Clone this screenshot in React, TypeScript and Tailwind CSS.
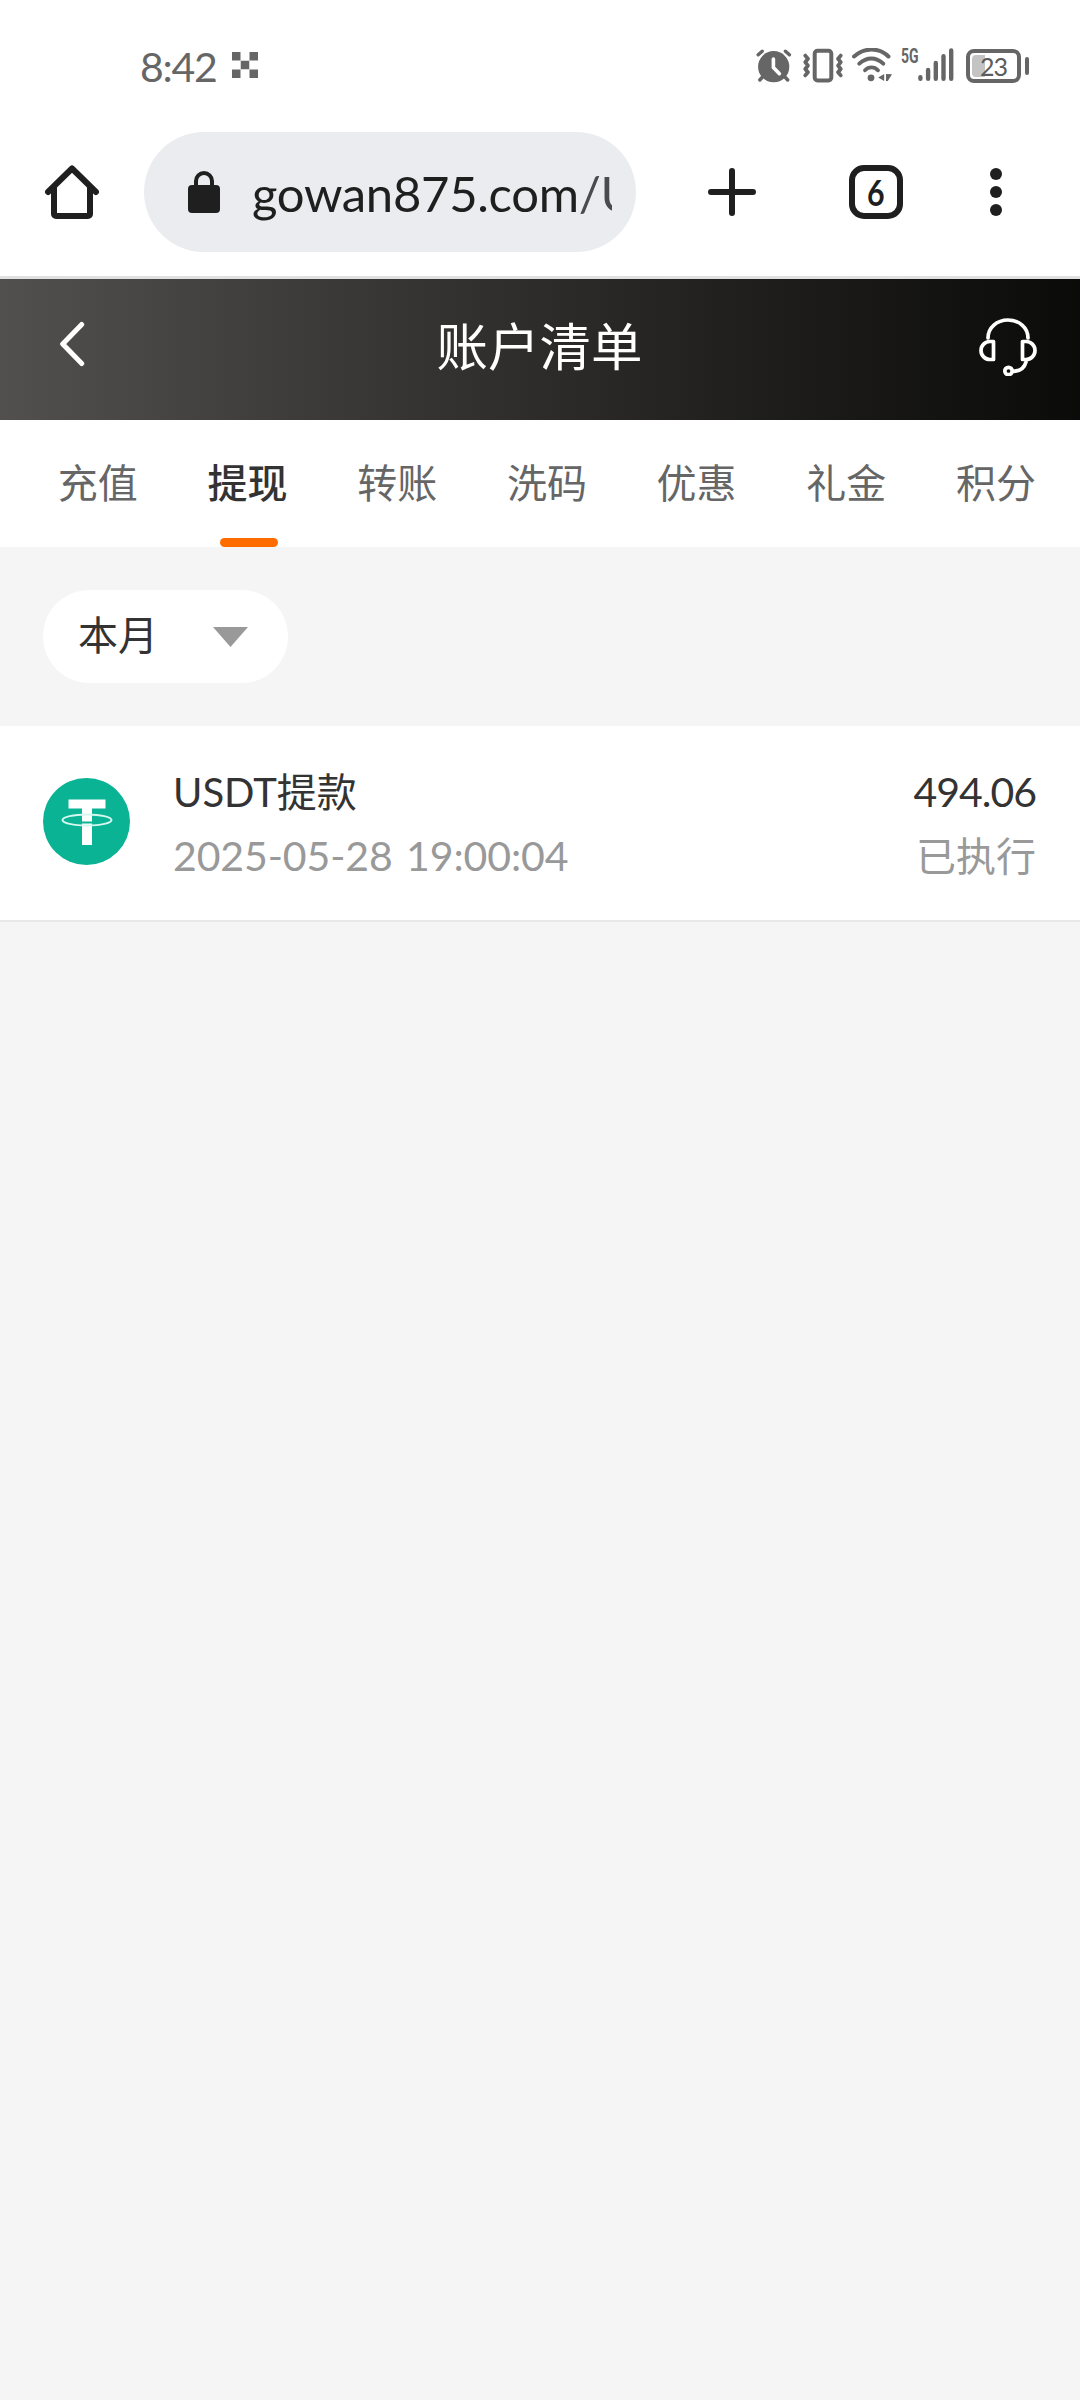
import React from 'react';

type Tab = {
  name: string;
  active?: boolean;
};

const tabs: Tab[] = [
  { name: '充值' },
  { name: '提现', active: true },
  { name: '转账' },
  { name: '洗码' },
  { name: '优惠' },
  { name: '礼金' },
  { name: '积分' },
];

const records = [
  { title: 'USDT提款', time: '2025-05-28 19:00:04', amount: '494.06', status: '已执行' },
];

function ChequerIcon() {
  return (
    <svg width="26" height="26" viewBox="0 0 26 26" fill="#666666" className="-mt-[2px] flex-none">
      <path d="M0 0h8.5v8.5H0zM17.5 0H26v8.5h-8.5zM8.75 8.75h8.5v8.5h-8.5zM0 17.5h8.5V26H0zM17.5 17.5H26V26h-8.5z" />
    </svg>
  );
}

function AlarmIcon() {
  return (
    <svg width="36" height="36" viewBox="0 0 36 36" fill="none" strokeLinecap="round" strokeLinejoin="round">
      <circle cx="17.7" cy="18.7" r="15.6" fill="#666666" />
      <path d="M2.2 6.8L6.2 3.2M29.4 3.2l4 3.6M6.5 29l-2.7 3M29 29l2.7 3" stroke="#666666" strokeWidth="3.4" />
      <path d="M17.4 11v8.5l6 6.2" stroke="#fff" strokeWidth="3.6" />
    </svg>
  );
}

function VibrateIcon() {
  return (
    <svg width="40" height="36" viewBox="0 0 40 36" fill="none" stroke="#666666" strokeLinecap="round" strokeLinejoin="round">
      <rect x="11.7" y="2.8" width="16.6" height="29.6" rx="2.8" strokeWidth="4" />
      <path d="M2.3 7.6l2.6 3.2-2.6 3.4 2.6 3.4-2.6 3.4 2.6 3.2-2.6 3.2M37.7 7.6l-2.6 3.2 2.6 3.4-2.6 3.4 2.6 3.4-2.6 3.2 2.6 3.2" strokeWidth="3.8" />
    </svg>
  );
}

function WifiIcon() {
  return (
    <svg width="42" height="36" viewBox="0 0 42 36" fill="none" stroke="#666666" strokeLinecap="round">
      <path d="M2 8.5C12.5-.8 27-.8 36.5 8.5" strokeWidth="4" />
      <path d="M7.3 15.6c7.4-6.8 16.6-6.8 24 0" strokeWidth="4" />
      <path d="M13 22.3c3.6-3.8 9.3-3.8 13 0" strokeWidth="3.8" />
      <circle cx="19" cy="29.8" r="3.4" fill="#666666" stroke="none" />
      <path d="M32.2 26v7l-6-3.5zM34 26l6 .3-4.2 6.7H34z" fill="#666666" stroke="none" />
    </svg>
  );
}

function SignalIcon() {
  return (
    <svg width="37" height="36" viewBox="0 0 37 36" stroke="#666666" strokeWidth="4.4" strokeLinecap="round">
      <path d="M2.4 29.3v1.4M10.1 22v8.7M17.8 15v15.7M25.5 8.2v22.5M33.2 2.4v28.3" />
    </svg>
  );
}

function Battery({ level }: { level: number }) {
  return (
    <div className="flex items-center gap-[4px]">
      <div className="relative flex h-[34px] w-[55px] items-center justify-center rounded-[8px] border-[4px] border-[#666666]">
        <div
          className="absolute left-[2px] top-[2px] h-[22px] rounded-l-[4px] bg-[#c4c4c4]"
          style={{ width: `${level * 0.55}px` }}
        />
        <span className="relative text-[25px] leading-none tracking-[-1px] text-[#5c5c5c]">{level}</span>
      </div>
      <div className="h-[18px] w-[4px] rounded-full bg-[#666666]" />
    </div>
  );
}

function StatusBar() {
  return (
    <div className="flex h-[108px] flex-none items-center pl-[140px] pt-[24px]">
      <span className="w-[92px] text-[41px] leading-none tracking-[-1.3px] text-[#666666]">8:42</span>
      <ChequerIcon />
      <div className="ml-[498px] flex items-center">
        <AlarmIcon />
        <div className="ml-[11px]">
          <VibrateIcon />
        </div>
        <div className="ml-[9px]">
          <WifiIcon />
        </div>
        <span className="ml-[7px] h-[36px] w-[17px] origin-left scale-x-[0.7] whitespace-nowrap font-['Roboto',sans-serif] text-[20px] font-bold leading-[17px] text-[#666666]">
          5G
        </span>
        <SignalIcon />
        <div className="ml-[11px]">
          <Battery level={23} />
        </div>
      </div>
    </div>
  );
}

function BrowserBar() {
  return (
    <div className="flex h-[168px] flex-none items-center pl-[45px] text-[#1f1f1f]">
      <svg width="54" height="54" viewBox="0 0 54 54" fill="none" stroke="currentColor" strokeWidth="6" strokeLinecap="round" strokeLinejoin="round">
        <path d="M3 27L27 3.5 51 27M9 22v27a2 2 0 0 0 2 2h32a2 2 0 0 0 2-2V22" />
      </svg>
      <div className="ml-[45px] flex h-[120px] w-[492px] items-center rounded-full bg-[#ebecf0] pl-[44px]">
        <svg width="32" height="42" viewBox="0 0 32 42" className="flex-none">
          <rect y="14" width="32" height="28" rx="4" fill="currentColor" />
          <path d="M8 16v-6a8 8 0 0 1 16 0v6" fill="none" stroke="currentColor" strokeWidth="4" />
        </svg>
        <div className="ml-[32px] w-[360px] overflow-hidden whitespace-nowrap pt-[2px] text-[49px] leading-[64px] tracking-[-0.3px]">
          gowan875.com<span className="text-[#4a4b4d]">/U</span>
        </div>
      </div>
      <svg width="48" height="48" viewBox="0 0 48 48" className="ml-[72px]" stroke="currentColor" strokeWidth="6" strokeLinecap="round">
        <path d="M24 3v42M3 24h42" />
      </svg>
      <div className="ml-[93px] flex h-[54px] w-[54px] items-center justify-center rounded-[15px] border-[6px] border-current">
        <span className="scale-x-[0.82] pb-[2px] text-[37px] font-bold leading-none">6</span>
      </div>
      <svg width="12" height="48" viewBox="0 0 12 48" className="ml-[87px]" fill="currentColor">
        <circle cx="6" cy="6" r="6" />
        <circle cx="6" cy="24" r="6" />
        <circle cx="6" cy="42" r="6" />
      </svg>
    </div>
  );
}

function PageHeader() {
  return (
    <header className="flex h-[144px] flex-none items-center justify-between border-t-[3px] border-[#e0e0e0] bg-linear-to-r from-[#51504e] via-[#2d2c2a] to-[#0b0b09] pb-[5px] pl-[60px] pr-[43px] text-white">
      <svg width="40" height="48" viewBox="0 0 40 48" fill="none" stroke="currentColor" strokeWidth="5" strokeLinecap="round" strokeLinejoin="round" className="-mt-[6px]">
        <path d="M21.7 4.5L2.7 24l19 19.5" />
      </svg>
      <h1 className="pb-[2px] text-[51.5px] leading-[60px]">账户清单</h1>
      <svg width="58" height="58" viewBox="0 0 58 58" fill="none" stroke="currentColor" strokeWidth="3.7" strokeLinecap="round" strokeLinejoin="round">
        <path d="M9 20C9 9.5 18 2 29 2s20 7.5 20 18" />
        <path d="M14.5 23.5v18H11a9 9 0 0 1 0-18zM43.5 23.5v18H47a9 9 0 0 0 0-18z" />
        <path d="M47 44c-1.5 5.5-6 9-12.5 9.3" />
        <circle cx="29.5" cy="53" r="3.7" />
      </svg>
    </header>
  );
}

function TabBar() {
  return (
    <nav className="flex h-[127px] flex-none bg-white pl-[23px]">
      {tabs.map((tab) => (
        <div key={tab.name} className="flex w-[149.7px] flex-none flex-col items-center">
          <span
            className={`flex h-[118px] items-center pt-[8px] text-[40px] ${
              tab.active ? 'font-medium text-[#333333]' : 'text-[#666666]'
            }`}
          >
            {tab.name}
          </span>
          {tab.active && <span className="ml-[3px] h-[9px] w-[58px] rounded-full bg-[#ff6c00]" />}
        </div>
      ))}
    </nav>
  );
}

function MonthFilter() {
  return (
    <div className="h-[179px] flex-none px-[43px] pt-[43px]">
      <button type="button" className="flex h-[93px] w-[245px] items-center justify-between rounded-full bg-white pl-[35px] pr-[40px]">
        <span className="pb-[4px] text-[40px] leading-none text-[#333333]">本月</span>
        <svg width="35" height="20" viewBox="0 0 35 20" fill="#999999">
          <path d="M0 0h35L17.5 20z" />
        </svg>
      </button>
    </div>
  );
}

function TetherIcon() {
  return (
    <svg width="87" height="87" viewBox="0 0 87 87" className="-mt-[4px] flex-none">
      <circle cx="43.5" cy="43.5" r="43.5" fill="#09b394" />
      <path d="M25.5 21.5h37v9H49V67H39V30.5H25.5z" fill="#fff" />
      <path d="M39 44.5h10" stroke="#09b394" strokeWidth="2" />
      <ellipse cx="44" cy="42" rx="24.5" ry="5.5" fill="none" stroke="#d4f7ee" strokeWidth="2" />
    </svg>
  );
}

export default function App() {
  return (
    <div className="flex h-[2400px] w-[1080px] flex-col overflow-hidden bg-[#f5f5f5] font-['Lato','Noto_Sans_CJK_SC',sans-serif]">
      <div className="flex-none bg-white">
        <StatusBar />
        <BrowserBar />
      </div>
      <PageHeader />
      <TabBar />
      <MonthFilter />
      <ul>
        {records.map((record) => (
          <li key={record.time} className="flex h-[196px] items-center border-b-2 border-[#e9e9e9] bg-white pl-[43px] pr-[44px]">
            <TetherIcon />
            <div className="ml-[43px] flex flex-1 flex-col pt-[2px]">
              <span className="text-[40px] leading-[64px] text-[#333333]">{record.title}</span>
              <span className="text-[41px] leading-[64px] tracking-[-0.1px] text-[#999999] [word-spacing:3px]">{record.time}</span>
            </div>
            <div className="flex flex-col pt-[2px] text-right">
              <span className="text-[41px] leading-[64px] tracking-[-1px] text-[#333333]">{record.amount}</span>
              <span className="text-[40px] leading-[64px] text-[#999999]">{record.status}</span>
            </div>
          </li>
        ))}
      </ul>
    </div>
  );
}
